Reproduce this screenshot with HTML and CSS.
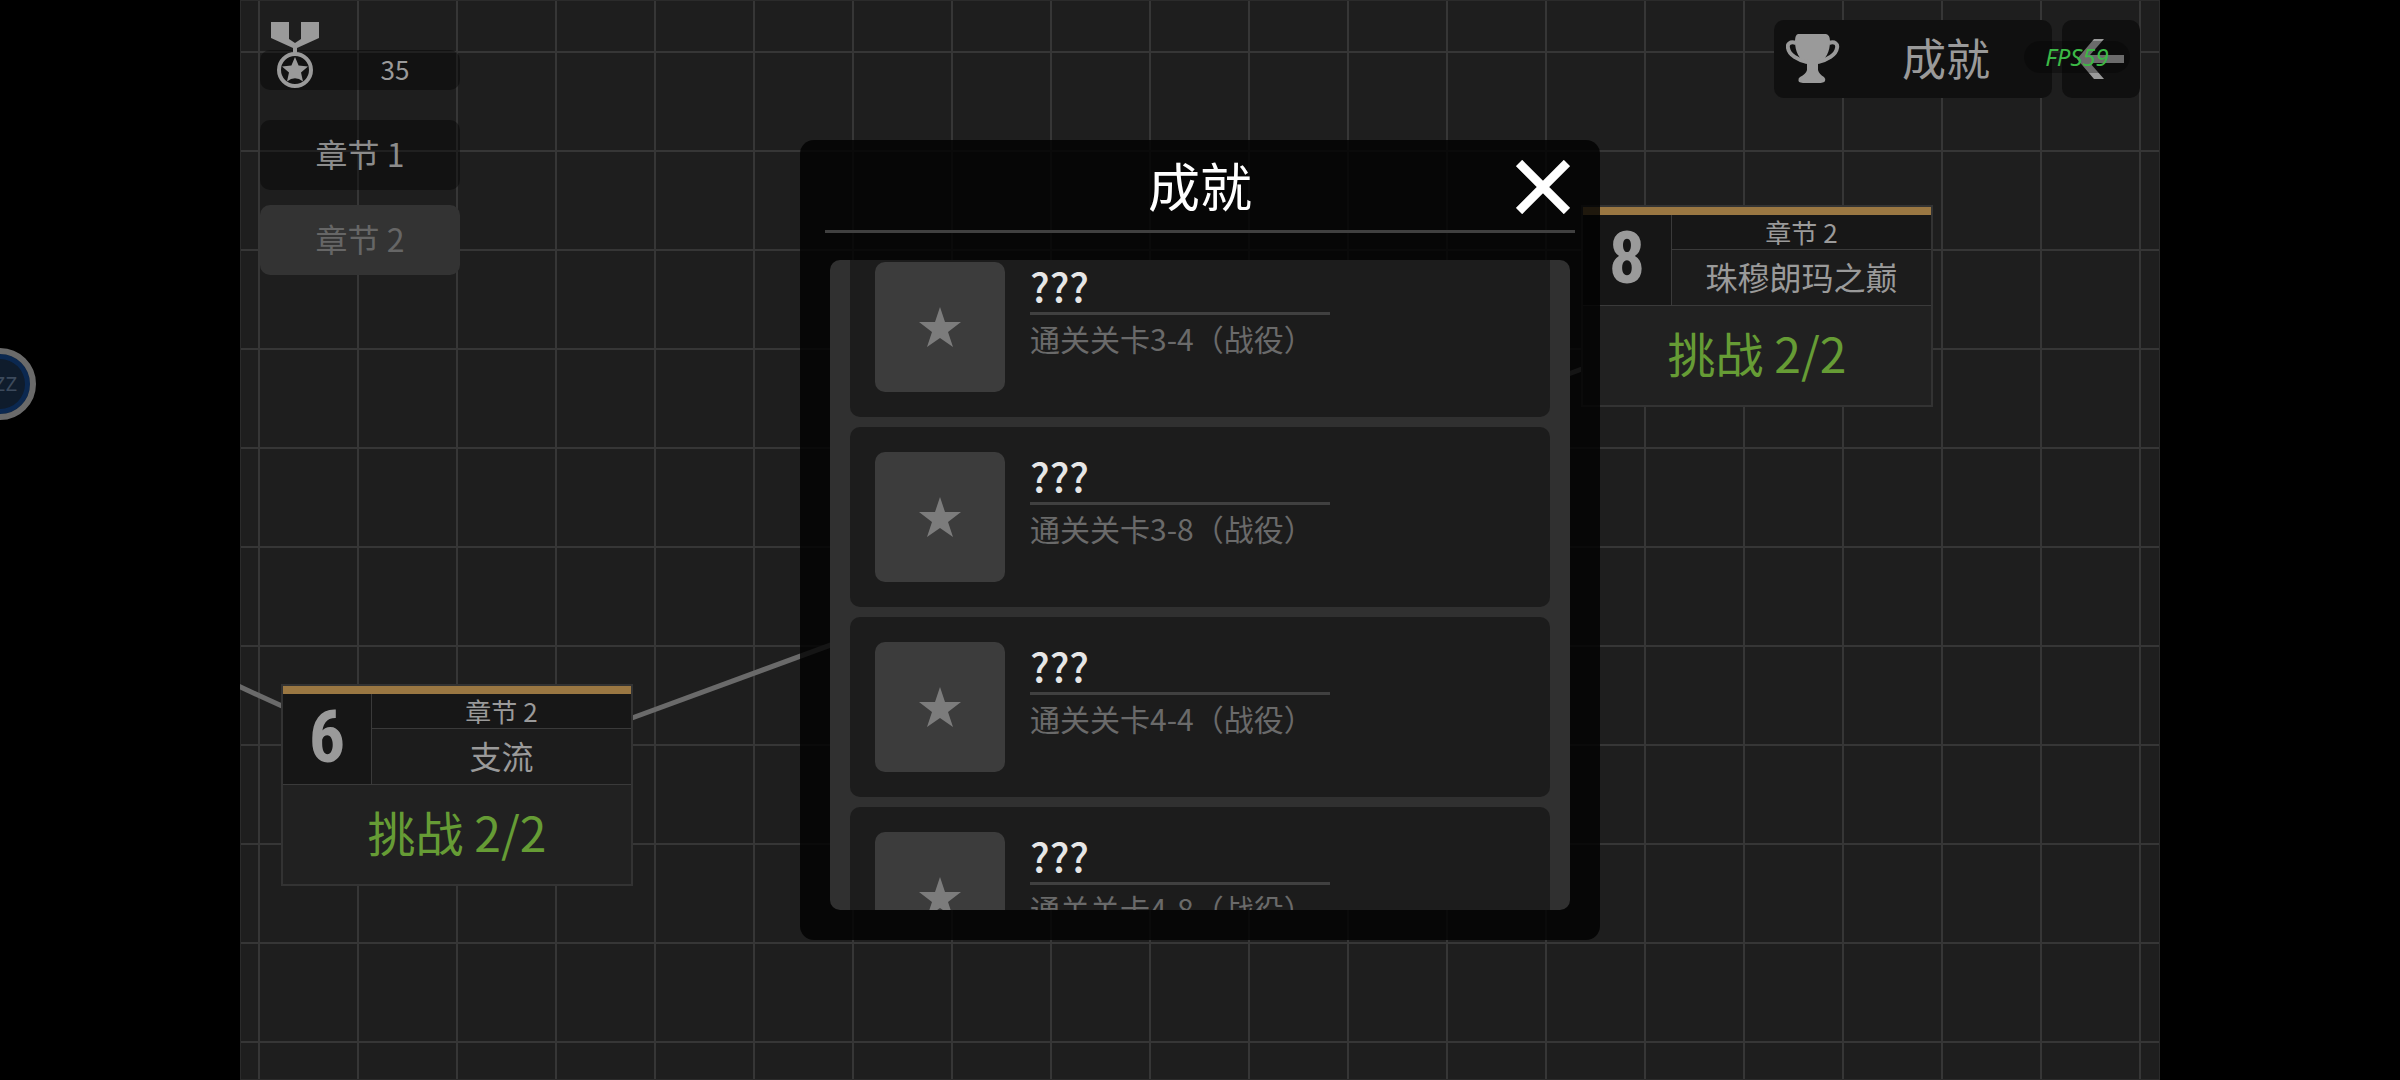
FILE: index.html
```html
<!DOCTYPE html>
<html lang="zh-CN">
<head>
    <meta charset="UTF-8">
    <meta name="viewport" content="width=device-width, initial-scale=1.0">
    <title>成就</title>
    <link rel="stylesheet" href="styles.css">
</head>
<body>
    <main class="stage">
        <div class="map">
            <svg class="links" aria-hidden="true">
                <line x1="-4" y1="685" x2="42" y2="706"/>
                <line x1="392" y1="718" x2="1342" y2="369"/>
            </svg>

            <article class="level level-6">
                <div class="level-number">6</div>
                <div class="level-chapter">章节 2</div>
                <div class="level-name">支流</div>
                <div class="level-challenge">挑战 2/2</div>
            </article>

            <article class="level level-8">
                <div class="level-number">8</div>
                <div class="level-chapter">章节 2</div>
                <div class="level-name">珠穆朗玛之巅</div>
                <div class="level-challenge">挑战 2/2</div>
            </article>
        </div>

        <header class="hud">
            <nav class="chapters">
                <div class="medals">
                    <svg class="medal" viewBox="0 0 50 68" aria-hidden="true">
                        <path d="M1 0H19V17L25 21L31 17V0H49V16L27 26V32H23V26L1 16Z"/>
                        <circle cx="25" cy="48" r="16" fill="none" stroke="#9a9a9a" stroke-width="4"/>
                        <path d="M25 35L28.6 43.6L38 44.4L31 50.5L33 59.5Q25 53 17 59.5L19 50.5L12 44.4L21.4 43.6Z"/>
                    </svg>
                    <span class="medal-count">35</span>
                </div>
                <button class="chapter">章节 1</button>
                <button class="chapter active">章节 2</button>
            </nav>

            <div class="actions">
                <button class="action trophy-button">
                    <svg class="trophy" viewBox="0 0 54 50" aria-hidden="true">
                        <path d="M12 0H40Q44 1 44 7C44 18 40 25 32 30V36Q33 40 38 43Q40 45 39 47Q38 49 32 49H20Q13 49 12.500 47Q12 44 14 43Q20 40 21 36V30C13 25 9 18 9 7Q9 1 12 0Z"/>
                        <path d="M10 9C4 7 1 10 2 14C3 21 12 26 21 28M43 9C49 7 52 10 51 14C50 21 41 26 32 28" fill="none" stroke="#9a9a9a" stroke-width="4"/>
                    </svg>
                    <span>成就</span>
                </button>
                <button class="action back-button" aria-label="返回">
                    <svg class="back" viewBox="0 0 48 40" aria-hidden="true">
                        <path d="M17 0H27L13 16H47V24H13L27 40H17L0 20Z"/>
                    </svg>
                </button>
                <div class="fps">FPS59</div>
            </div>
        </header>

        <section class="modal" role="dialog" aria-labelledby="modal-title">
            <div class="modal-header">
                <h1 id="modal-title">成就</h1>
                <button class="close" aria-label="关闭">
                    <svg viewBox="0 0 54 54" aria-hidden="true">
                        <path d="M3 3L51 51M51 3L3 51"/>
                    </svg>
                </button>
            </div>
            <ul class="achievements" id="achievements">
                <li class="achievement">
                    <div class="badge"><svg viewBox="0 0 42 40"><path d="M21 0L26 15H42L29 25L34 40L21 31L8 40L13 25L0 15H16Z"/></svg></div>
                    <div class="info">
                        <h2>???</h2>
                        <p>通关关卡3-4（战役）</p>
                    </div>
                </li>
                <li class="achievement">
                    <div class="badge"><svg viewBox="0 0 42 40"><path d="M21 0L26 15H42L29 25L34 40L21 31L8 40L13 25L0 15H16Z"/></svg></div>
                    <div class="info">
                        <h2>???</h2>
                        <p>通关关卡3-8（战役）</p>
                    </div>
                </li>
                <li class="achievement">
                    <div class="badge"><svg viewBox="0 0 42 40"><path d="M21 0L26 15H42L29 25L34 40L21 31L8 40L13 25L0 15H16Z"/></svg></div>
                    <div class="info">
                        <h2>???</h2>
                        <p>通关关卡4-4（战役）</p>
                    </div>
                </li>
                <li class="achievement">
                    <div class="badge"><svg viewBox="0 0 42 40"><path d="M21 0L26 15H42L29 25L34 40L21 31L8 40L13 25L0 15H16Z"/></svg></div>
                    <div class="info">
                        <h2>???</h2>
                        <p>通关关卡4-8（战役）</p>
                    </div>
                </li>
            </ul>
        </section>
    </main>

    <div class="bubble">ZZ</div>

    <script>
        document.getElementById('achievements').scrollTop = 23;
    </script>
</body>
</html>
```
FILE: styles.css
```css
* {
    box-sizing: border-box;
    margin: 0;
    padding: 0;
}

body {
    background: #000;
    color: #9a9a9a;
    font-family: "Noto Sans CJK SC", "Noto Sans", sans-serif;
    height: 100vh;
    overflow: hidden;
}

button {
    border: none;
    color: inherit;
    font-family: inherit;
    cursor: pointer;
}

svg {
    display: block;
    fill: #9a9a9a;
}

.stage {
    position: relative;
    width: 80%;
    height: 100%;
    margin: 0 auto;
    overflow: hidden;
    display: flex;
    justify-content: center;
    align-items: center;
    background-color: #1e1e1e;
    background-image:
        linear-gradient(90deg, #363636 2px, transparent 2px),
        linear-gradient(#363636 2px, transparent 2px);
    background-size: 99px 99px;
    background-position: 18px 51px;
    box-shadow: inset 0 0 0 1px #2b2b2b;
}

/* map */

.map {
    position: absolute;
    inset: 0;
}

.links {
    width: 100%;
    height: 100%;
    stroke: #6a6a6a;
    stroke-width: 5;
}

.level {
    position: absolute;
    width: 352px;
    display: grid;
    grid-template-columns: 89px 1fr;
    grid-template-rows: 8px 35px 56px 99px;
    border: 2px solid #333;
    background: #212121;
    text-align: center;
}

.level::before {
    content: "";
    grid-column: 1 / 3;
    background: #9a7742;
}

.level-6 {
    left: 41px;
    top: 684px;
}

.level-8 {
    left: 1341px;
    top: 205px;
}

.level-number {
    grid-row: 2 / 4;
    border-right: 1px solid #3a3a3a;
    border-bottom: 1px solid #3a3a3a;
    background: #161616;
    font-family: "Liberation Sans Narrow", "Roboto Condensed", "DejaVu Sans Condensed", sans-serif;
    font-weight: bold;
    font-size: 72px;
    line-height: 88px;
}

.level-chapter {
    border-bottom: 1px solid #3a3a3a;
    background: #171717;
    font-size: 26px;
    line-height: 34px;
}

.level-name {
    border-bottom: 1px solid #3a3a3a;
    background: #1c1c1c;
    font-size: 32px;
    line-height: 52px;
}

.level-challenge {
    grid-column: 1 / 3;
    color: #669c35;
    font-size: 48px;
    line-height: 92px;
}

/* top bar */

.hud {
    position: relative;
    align-self: flex-start;
    width: 100%;
    padding: 20px;
    display: flex;
    justify-content: space-between;
    align-items: flex-start;
}

.chapters {
    width: 200px;
    padding-top: 30px;
    display: flex;
    flex-direction: column;
    gap: 15px;
}

.medals {
    height: 40px;
    margin-bottom: 15px;
    padding: 0 10px;
    display: flex;
    align-items: flex-end;
    border-radius: 10px;
    background: rgba(0, 0, 0, 0.4);
}

.medal {
    width: 50px;
    height: 68px;
}

.medal-count {
    flex: 1;
    padding-left: 20px;
    text-align: center;
    font-size: 26px;
    line-height: 42px;
}

.chapter {
    height: 70px;
    padding-bottom: 4px;
    border-radius: 10px;
    background: rgba(0, 0, 0, 0.4);
    color: #8c8c8c;
    font-size: 32px;
}

.chapter.active {
    background: #333;
    color: #666;
}

.actions {
    position: relative;
    display: flex;
    gap: 10px;
}

.action {
    height: 78px;
    border-radius: 10px;
    background: #101010;
    display: flex;
    align-items: center;
}

.trophy-button {
    width: 278px;
    padding: 0 12px;
    font-size: 44px;
}

.trophy-button span {
    flex: 1;
    padding: 0 0 4px 12px;
}

.trophy {
    width: 54px;
    height: 50px;
}

.back-button {
    width: 78px;
    justify-content: center;
}

.back {
    width: 48px;
    height: 40px;
}

.fps {
    position: absolute;
    right: 10px;
    top: 21px;
    width: 106px;
    border-radius: 16px;
    background: rgba(0, 0, 0, 0.3);
    color: #3cb946;
    font-family: "Noto Sans", sans-serif;
    font-style: italic;
    font-size: 24px;
    line-height: 32px;
    text-align: center;
}

/* achievements window */

.modal {
    position: absolute;
    width: 800px;
    max-width: 100%;
    padding: 0 30px 30px;
    border-radius: 14px;
    background: rgba(0, 0, 0, 0.8);
}

.modal-header {
    margin: 0 -5px 27px;
    padding: 0 5px;
    display: grid;
    grid-template-columns: 1fr auto 1fr;
    align-items: center;
    border-bottom: 3px solid #404040;
    color: #fff;
}

.modal-header h1 {
    grid-column: 2;
    font-size: 52px;
    font-weight: normal;
    line-height: 90px;
}

.close {
    justify-self: end;
    padding-top: 4px;
    background: none;
}

.close svg {
    width: 54px;
    height: 54px;
    stroke: #fff;
    stroke-width: 9;
}

.achievements {
    height: 650px;
    padding: 0 20px 20px;
    display: flex;
    flex-direction: column;
    gap: 10px;
    overflow-y: auto;
    scrollbar-width: none;
    border-radius: 10px;
    background: #303030;
    list-style: none;
}

.achievement {
    flex: none;
    padding: 25px;
    display: flex;
    gap: 25px;
    border-radius: 10px;
    background: #1c1c1c;
}

.badge {
    width: 130px;
    height: 130px;
    display: flex;
    justify-content: center;
    align-items: center;
    border-radius: 10px;
    background: #3c3c3c;
}

.badge svg {
    width: 42px;
    height: 40px;
    fill: #7c7c7c;
}

.info {
    width: 300px;
}

.info h2 {
    padding-bottom: 4px;
    border-bottom: 3px solid #404040;
    color: #e6e6e6;
    font-size: 40px;
    font-weight: 500;
    line-height: 46px;
}

.info p {
    color: #6a6a6a;
    font-size: 30px;
    line-height: 46px;
}

/* floating bubble */

.bubble {
    position: absolute;
    left: -36px;
    top: 348px;
    width: 72px;
    height: 72px;
    padding-right: 13px;
    border: 6px solid #6a6a6a;
    border-radius: 50%;
    background: #0f1c2c;
    box-shadow: inset 0 0 0 5px #0b2850;
    color: #3c4a5c;
    font-family: "DejaVu Sans Mono", monospace;
    font-size: 20px;
    line-height: 60px;
    text-align: right;
}
```
